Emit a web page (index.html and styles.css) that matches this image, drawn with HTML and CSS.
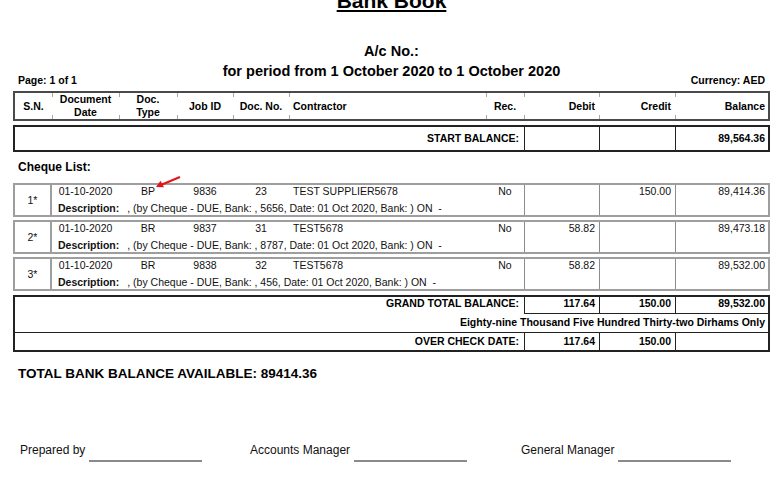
FILE: index.html
```html
<!DOCTYPE html>
<html>
<head>
<meta charset="utf-8">
<link rel="stylesheet" href="styles.css">
</head>
<body>
<div class="page">
  <h1 class="title">Bank Book</h1>
  <div class="acno">A/c No.:</div>
  <div class="meta">
    <div class="page-no">Page: 1 of 1</div>
    <div class="period">for period from 1 October 2020 to 1 October 2020</div>
    <div class="currency">Currency: AED</div>
  </div>

  <div class="box head">
    <div class="c center">S.N.</div>
    <div class="c center tick">Document<br>Date</div>
    <div class="c center tick">Doc.<br>Type</div>
    <div class="c center tick">Job ID</div>
    <div class="c center tick">Doc. No.</div>
    <div class="c left tick">Contractor</div>
    <div class="c center tick">Rec.</div>
    <div class="c right tick">Debit</div>
    <div class="c right tick">Credit</div>
    <div class="c right last tick">Balance</div>
  </div>

  <div class="box start">
    <div class="label">START BALANCE:</div>
    <div class="num"></div>
    <div class="num"></div>
    <div class="num last">89,564.36</div>
  </div>

  <div class="cheque-label">Cheque List:</div>

  <div class="rows">
    <div class="box crow">
      <div class="sn">1*</div>
      <div class="f center">01-10-2020</div>
      <div class="f center type">BP<svg class="arrow" width="26" height="14" viewBox="0 0 26 14"><line x1="25" y1="2" x2="7" y2="9.4" stroke="#e3141b" stroke-width="2.2"/><polygon points="1,12 5.6,5.8 9,12.2" fill="#e3141b"/></svg></div>
      <div class="f center">9836</div>
      <div class="f center">23</div>
      <div class="f contractor">TEST SUPPLIER5678</div>
      <div class="f center">No</div>
      <div class="amt"></div>
      <div class="amt">150.00</div>
      <div class="amt last">89,414.36</div>
      <div class="desc"><b>Description:</b><span class="dtext">, (by Cheque - DUE, Bank: , 5656, Date: 01 Oct 2020, Bank: ) ON&nbsp; -</span></div>
    </div>
    <div class="box crow">
      <div class="sn">2*</div>
      <div class="f center">01-10-2020</div>
      <div class="f center">BR</div>
      <div class="f center">9837</div>
      <div class="f center">31</div>
      <div class="f contractor">TEST5678</div>
      <div class="f center">No</div>
      <div class="amt">58.82</div>
      <div class="amt"></div>
      <div class="amt last">89,473.18</div>
      <div class="desc"><b>Description:</b><span class="dtext">, (by Cheque - DUE, Bank: , 8787, Date: 01 Oct 2020, Bank: ) ON&nbsp; -</span></div>
    </div>
    <div class="box crow">
      <div class="sn">3*</div>
      <div class="f center">01-10-2020</div>
      <div class="f center">BR</div>
      <div class="f center">9838</div>
      <div class="f center">32</div>
      <div class="f contractor">TEST5678</div>
      <div class="f center">No</div>
      <div class="amt">58.82</div>
      <div class="amt"></div>
      <div class="amt last">89,532.00</div>
      <div class="desc"><b>Description:</b><span class="dtext">, (by Cheque - DUE, Bank: , 456, Date: 01 Oct 2020, Bank: ) ON&nbsp; -</span></div>
    </div>
  </div>

  <div class="box totals">
    <div class="tlabel r1">GRAND TOTAL BALANCE:</div>
    <div class="tnum r1 under">117.64</div>
    <div class="tnum r1 under">150.00</div>
    <div class="tnum r1 under last">89,532.00</div>
    <div class="words">Eighty-nine Thousand Five Hundred Thirty-two Dirhams Only</div>
    <div class="tlabel r3">OVER CHECK DATE:</div>
    <div class="tnum r3">117.64</div>
    <div class="tnum r3">150.00</div>
    <div class="tnum r3 last"></div>
  </div>

  <div class="available">TOTAL BANK BALANCE AVAILABLE: 89414.36</div>

  <div class="signs">
    <div class="sign g1"><span class="slabel">Prepared by</span><span class="sline"></span></div>
    <div class="sign g2"><span class="slabel">Accounts Manager</span><span class="sline"></span></div>
    <div class="sign g3"><span class="slabel">General Manager</span><span class="sline"></span></div>
  </div>
</div>
</body>
</html>
```

FILE: styles.css
```css
* { box-sizing: border-box; margin: 0; padding: 0; }

html, body {
  width: 784px;
  height: 488px;
  overflow: hidden;
  background: #fff;
}

body {
  margin: 0;
  font-family: "Liberation Sans", Arial, sans-serif;
  color: #000;
}

.page {
  display: flow-root;
  padding: 0 14px 0 13px;
  --cols: 37px 67px 58px 56px 56px 197px 38px 75px 76px 93px;
}

.title {
  margin-top: -10px;
  font-size: 21px;
  line-height: 21px;
  font-weight: bold;
  text-align: center;
  text-decoration: underline;
}

.acno {
  margin-top: 32px;
  font-size: 14.5px;
  line-height: 17px;
  font-weight: bold;
  text-align: center;
}

.meta {
  margin-top: 3px;
  height: 23px;
  display: grid;
  grid-template-columns: 1fr auto 1fr;
  font-weight: bold;
}

.period {
  align-self: start;
  font-size: 14.5px;
  line-height: 17px;
}

.page-no, .currency {
  align-self: end;
  font-size: 10.5px;
  line-height: 12px;
}

.page-no { padding-left: 5px; }
.currency { justify-self: end; padding-right: 5px; }

.box {
  width: 757px;
  display: grid;
  grid-template-columns: var(--cols);
}

/* header */
.head {
  margin-top: 5px;
  height: 30px;
  border: 2px solid #4a4a4a;
  font-size: 10.5px;
  line-height: 13px;
  font-weight: bold;
}

.c {
  display: flex;
  align-items: center;
}

.center { justify-content: center; text-align: center; }
.left { justify-content: flex-start; padding-left: 4px; }
.right { justify-content: flex-end; padding-right: 4px; }
.c.last { padding-right: 3px; }

.tick {
  background:
    linear-gradient(#a8a8a8, #a8a8a8) 0 0 / 1px 4px no-repeat,
    linear-gradient(#a8a8a8, #a8a8a8) 0 100% / 1px 4px no-repeat;
}

/* start balance */
.start {
  margin-top: 4px;
  height: 27px;
  border: 2px solid #222;
  font-size: 10.5px;
  font-weight: bold;
  line-height: 23px;
}

.start .label {
  grid-column: 1 / 8;
  text-align: right;
  padding-right: 5px;
}

.start .num {
  border-left: 1px solid #222;
  text-align: right;
  padding-right: 4px;
}

.start .num.last { padding-right: 3px; }

.cheque-label {
  margin-top: 8px;
  padding-left: 5px;
  font-size: 12px;
  line-height: 14px;
  font-weight: bold;
}

/* cheque rows */
.rows {
  margin-top: 9px;
  display: flex;
  flex-direction: column;
  gap: 3px;
}

.crow {
  height: 34px;
  border: 2px solid #9e9e9e;
  grid-template-rows: 17px 13px;
  font-size: 10.5px;
  line-height: 12px;
  color: #111;
}

.sn {
  grid-row: 1 / 3;
  grid-column: 1;
  border-right: 2px solid #9e9e9e;
  display: flex;
  align-items: center;
  justify-content: center;
}

.f { grid-row: 1; white-space: nowrap; }
.f.center { text-align: center; }
.contractor { padding-left: 4px; }

.type { position: relative; }

.arrow {
  position: absolute;
  left: 36px;
  top: -10px;
}

.amt {
  grid-row: 1 / 3;
  border-left: 1px solid #8c8c8c;
  text-align: right;
  padding-right: 4px;
}

.amt.last { padding-right: 3px; }

.desc {
  grid-row: 2;
  grid-column: 2 / 8;
  padding-left: 6px;
  white-space: nowrap;
}

.dtext { margin-left: 8px; }

/* totals */
.totals {
  margin-top: 4px;
  border: 2px solid #222;
  grid-template-rows: 17px 19px 17px;
  font-size: 10.5px;
  line-height: 13px;
  font-weight: bold;
}

.tlabel {
  grid-column: 1 / 8;
  text-align: right;
  padding-right: 5px;
}

.r1 { grid-row: 1; }
.r3 { grid-row: 3; padding-top: 2px; }

.tnum {
  border-left: 1px solid #222;
  text-align: right;
  padding-right: 4px;
}

.tnum.last { padding-right: 3px; }
.tnum.under { border-bottom: 1px solid #222; }

.words {
  grid-row: 2;
  grid-column: 1 / 11;
  border-bottom: 1px solid #222;
  text-align: right;
  padding-right: 3px;
  padding-top: 2px;
}

.available {
  margin-top: 14px;
  padding-left: 5px;
  font-size: 13.5px;
  line-height: 15px;
  font-weight: bold;
}

/* signatures */
.signs {
  margin-top: 62px;
  padding-left: 7px;
  display: flex;
}

.sign {
  display: flex;
  align-items: flex-end;
  gap: 4px;
  font-size: 12px;
  color: #111;
}

.g1 { width: 230px; }
.g2 { width: 271px; }

.slabel {
  line-height: 14px;
  margin-bottom: 5px;
}

.sline {
  width: 113px;
  height: 2px;
  background: #8a8a8a;
}
```
